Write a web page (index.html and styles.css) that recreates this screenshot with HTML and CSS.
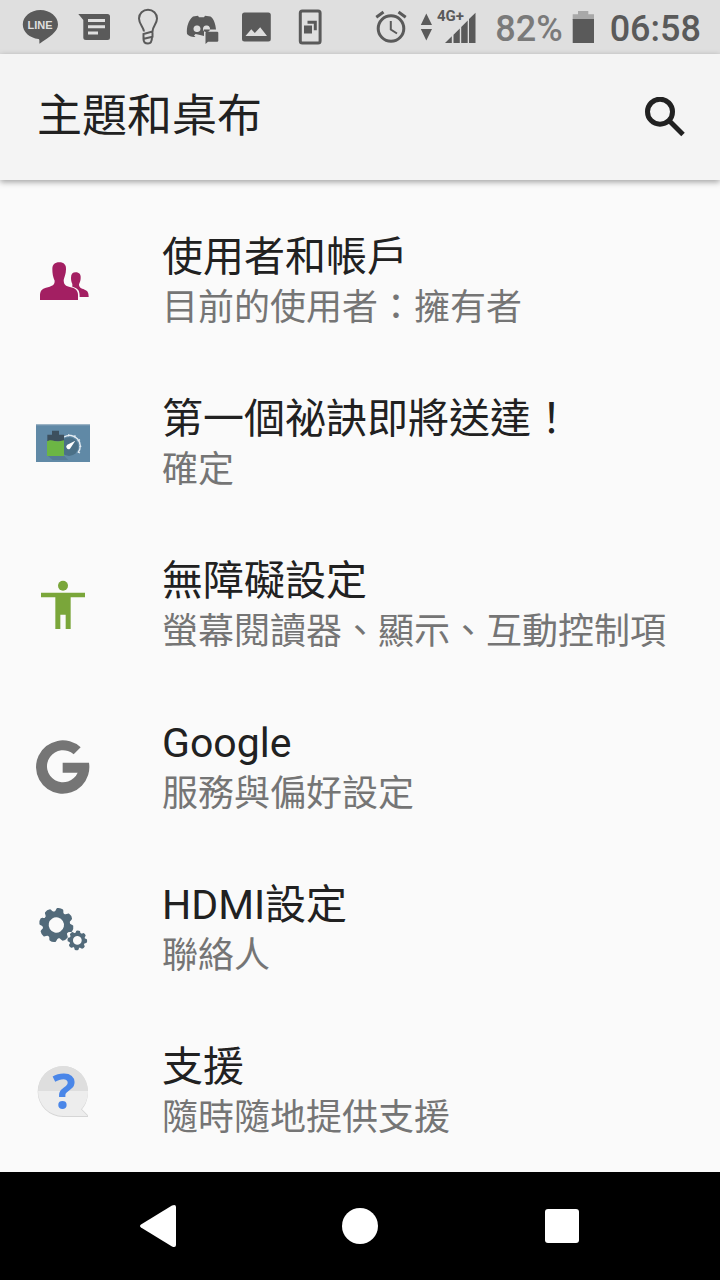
FILE: index.html
```html
<!DOCTYPE html>
<html lang="zh-Hant">
<head>
<meta charset="utf-8">
<meta name="viewport" content="width=device-width, initial-scale=1">
<title>主題和桌布</title>
<link rel="stylesheet" href="styles.css">
</head>
<body>
<div class="status-bar">
  <div class="notifications">
    <svg class="notification" viewBox="13 0 54 54" aria-hidden="true">
      <path d="M40.400 10C50 10 58 16.500 58 24.500C58 32 49 37 39.500 43.700C39 42 40 39.500 38.500 39C29.500 38 22.800 32 22.800 24.500C22.800 16.500 30.500 10 40.400 10Z"/>
      <text class="line-word" x="40" y="29" text-anchor="middle">LINE</text>
    </svg>
    <svg class="notification" viewBox="67 0 54 54" aria-hidden="true">
      <path d="M78.300 14H107.500Q110 14 110 16.500V37.500Q110 40 107.500 40H86Q83.300 40 83.300 37.500V20Z"/>
      <path class="cutout-line" d="M88 20.500H105M88 26.800H105M88 33H98"/>
    </svg>
    <svg class="notification" viewBox="121 0 54 54" aria-hidden="true">
      <path class="outline-thin" d="M144 31.500C143.500 27 139 24 139 18.500C139 13.500 143 9.800 148 9.800C153 9.800 157 13.500 157 18.500C157 24 152.500 26.500 152.500 31.500L143.500 34V39C143.500 42.500 145 43.500 148 43.500C151 43.500 152 41.500 152 37M144 38.800L152.500 36.800V31.500"/>
    </svg>
    <svg class="notification" viewBox="175 0 54 54" aria-hidden="true">
      <path fill-rule="evenodd" d="M193 16.500L198 15.800L199 17.200H204L205 15.800L210.500 16.500C214 19 215.500 24 216 29.500H204V36L200 35L195.500 34L194 35.500L195.500 37C192 37.500 189 36 187 34C186.300 27 188.500 20 193 16.500ZM197 25.500A3 3.300 0 1 0 197 32A3 3.300 0 1 0 197 25.500ZM206.500 25.500A3 3.300 0 1 0 206.500 32A3 3.300 0 1 0 206.500 25.500Z"/>
      <path d="M206.500 31.700H217.500L218.300 32.500V41L217.500 41.800H208L205.500 44V32.500Z"/>
    </svg>
    <svg class="notification" viewBox="229 0 54 54" aria-hidden="true">
      <rect x="242" y="12.600" width="28.800" height="28.800" rx="2.500"/>
      <path class="cutout" d="M245.500 36L251.300 29.300L254.800 33L260.200 27.200L267 36Z"/>
    </svg>
    <svg class="notification" viewBox="283 0 54 54" aria-hidden="true">
      <rect class="outline" x="300.300" y="11" width="19.800" height="32" rx="2"/>
      <rect x="304" y="25.500" width="8" height="8"/>
      <path d="M307.500 20.800H316.800V30.300H313.800V23.700H307.500Z"/>
    </svg>
  </div>
  <div class="system">
    <svg class="alarm" viewBox="374 0 34 54" aria-label="鬧鐘">
      <circle class="outline" cx="391" cy="28.500" r="12.800"/>
      <path class="outline" d="M376.300 17.200L383.500 12M398.500 12L405.700 17.200"/>
      <path class="outline-thin" d="M390.800 21V29.500L397 33.500"/>
    </svg>
    <svg class="signal" viewBox="420 0 58 54" aria-label="4G+">
      <path d="M426.300 13.500L432 25H420.800ZM420.800 29H432L426.300 40.500Z"/>
      <path d="M445 43L451.800 36.300V43ZM453.500 43V34.700L459.800 28.500V43ZM461.200 43V27L467.700 20.500V43ZM469 43V19L475.500 12.800V43Z"/>
      <text class="network" x="437" y="21">4G+</text>
    </svg>
    <span class="percent">82%</span>
    <svg class="battery" viewBox="572 0 22 54" aria-label="電池">
      <path class="battery-empty" d="M578 11H588.300V14.300H594V20H572.700V14.300H578Z"/>
      <path d="M572.700 19H594V43H572.700Z"/>
    </svg>
    <span class="clock">06:58</span>
  </div>
</div>

<header class="app-bar">
  <h1 class="app-title">主題和桌布</h1>
  <button class="search" type="button" aria-label="搜尋">
    <svg class="search-icon" viewBox="645 96 40 40" aria-hidden="true">
      <circle cx="660" cy="110.700" r="12.500"/>
      <path d="M670 120.500L683 133.500"/>
    </svg>
  </button>
</header>

<main class="settings">
  <a class="item" href="#users">
    <svg class="item-icon" viewBox="0 3 270 240" aria-hidden="true">
      <g class="users">
        <path d="M118 67C132 67 139 75 138 88C138 102 133 112 131 120C131 139 142 139 158 143C170 147 174 155 174 165V180H60V165C60 153 66 146 78 143C95 138 104 137 104 122C99 112 97 101 97 87C97 74 104 67 118 67Z"/>
        <path d="M167 97C178 97 183 104 182 114C182 123 179 127 177 133C177 143 183 145 194 149C203 152 206 158 206 171H179C179 153 176 145 157 140V132C154 126 153 120 153 113C153 102 158 97 167 97Z"/>
      </g>
    </svg>
    <span class="item-text"><span class="item-title">使用者和帳戶</span><span class="item-note">目前的使用者：擁有者</span></span>
  </a>
  <a class="item" href="#tips">
    <svg class="item-icon" viewBox="0 -21 270 240" aria-hidden="true">
      <rect fill="#6089a6" x="48" y="43" width="162" height="113"/>
      <path fill="#9eb5c5" d="M48 43H210V46H48Z"/>
      <path fill="#557b96" d="M83 137H132L145 150H98Z"/>
      <circle fill="#4b7087" cx="147" cy="110" r="28"/>
      <path fill="none" stroke="#e4ecf2" stroke-width="4" d="M132 81A32 32 0 0 1 174 128"/>
      <path fill="none" stroke="#e4ecf2" stroke-width="4" d="M146 79V73M162 82L166 76M173 93L180 89M178 109H184M174 126L180 129"/>
      <path fill="#3d505e" d="M82 74H96V62H117V74H132V94H82Z"/>
      <path fill="#6cb644" d="M81 94C94 85 106 96 118 94L132 91V138H81Z"/>
      <path fill="#fff" d="M166 92L150 116A7 7 0 1 1 142 104Z"/>
    </svg>
    <span class="item-text"><span class="item-title">第一個祕訣即將送達！</span><span class="item-note">確定</span></span>
  </a>
  <a class="item" href="#accessibility">
    <svg class="item-icon" viewBox="0 0 270 240" aria-hidden="true">
      <g class="accessibility">
        <circle cx="129" cy="62" r="15"/>
        <path d="M63 83H195V97H152V192H137V149H121V192H106V97H63Z"/>
      </g>
    </svg>
    <span class="item-text"><span class="item-title">無障礙設定</span><span class="item-note">螢幕閱讀器、顯示、互動控制項</span></span>
  </a>
  <a class="item" href="#google">
    <svg class="item-icon" viewBox="0 6 270 240" aria-hidden="true">
      <path class="google" d="M182 67A80 80 0 1 0 207 113H128V143H173A48 48 0 1 1 161 88Z"/>
    </svg>
    <span class="item-text"><span class="item-title">Google</span><span class="item-note">服務與偏好設定</span></span>
  </a>
  <a class="item" href="#hdmi">
    <svg class="item-icon" viewBox="0 -3 270 240" aria-hidden="true">
      <defs>
        <path id="tooth" d="M-15 -36C-11 -40 -12 -47 -9 -50Q0 -54 9 -50C12 -47 11 -40 15 -36Z"/>
        <g id="teeth">
          <use href="#tooth"/><use href="#tooth" transform="rotate(45)"/>
          <use href="#tooth" transform="rotate(90)"/><use href="#tooth" transform="rotate(135)"/>
          <use href="#tooth" transform="rotate(180)"/><use href="#tooth" transform="rotate(225)"/>
          <use href="#tooth" transform="rotate(270)"/><use href="#tooth" transform="rotate(315)"/>
        </g>
      </defs>
      <g class="gears">
        <g transform="translate(109 105) rotate(13)"><use href="#teeth"/><circle class="gear-ring" r="32"/></g>
        <g transform="translate(172 151) rotate(5) scale(.57)"><use href="#teeth"/><circle class="gear-ring" r="32"/></g>
      </g>
    </svg>
    <span class="item-text"><span class="item-title">HDMI設定</span><span class="item-note">聯絡人</span></span>
  </a>
  <a class="item" href="#support">
    <svg class="item-icon" viewBox="0 3 270 240" aria-hidden="true">
      <path fill="#d5d5d5" d="M129 49A76 76 0 1 0 129 201H204V196L186 178C224 136 201 49 129 49Z"/>
      <path fill="#ededed" d="M54 123A75 75 0 0 0 129 198H203L183 178C197 164 204 145 204 123Z"/>
      <path fill="#dedede" d="M54 123A75 75 0 0 1 204 123Z"/>
      <text class="question" x="132" y="176" text-anchor="middle">?</text>
    </svg>
    <span class="item-text"><span class="item-title">支援</span><span class="item-note">隨時隨地提供支援</span></span>
  </a>
</main>

<nav class="nav-bar">
  <button class="nav-button" type="button" aria-label="返回"><svg class="nav-icon" viewBox="0 0 44 44"><path d="M5 20.500L36 1.500Q40 0 40 3V41Q40 44 36 42.500L5 23.500Q3 22 5 20.500Z"/></svg></button>
  <button class="nav-button" type="button" aria-label="主畫面"><svg class="nav-icon" viewBox="0 0 44 44"><circle cx="22" cy="22" r="18"/></svg></button>
  <button class="nav-button" type="button" aria-label="總覽"><svg class="nav-icon" viewBox="0 0 44 44"><rect x="5" y="5" width="34" height="34" rx="3"/></svg></button>
</nav>
</body>
</html>
```

FILE: styles.css
```css
* {
  box-sizing: border-box;
}

body {
  margin: 0;
  min-height: 100vh;
  display: flex;
  flex-direction: column;
  background: #fafafa;
  color: #212121;
  font-family: Roboto, "Noto Sans CJK TC", sans-serif;
}

button {
  border: 0;
  padding: 0;
  background: none;
}

svg {
  display: block;
  flex: none;
}

/* Status bar */
.status-bar {
  height: 54px;
  padding: 0 19px 0 13px;
  display: flex;
  justify-content: space-between;
  background: #dfdfdf;
  color: #5a5a5a;
  fill: #5a5a5a;
}

.notifications,
.system {
  display: flex;
  align-items: center;
}

.notification {
  width: 54px;
  height: 54px;
}

.cutout {
  fill: #dfdfdf;
}

.cutout-line {
  stroke: #dfdfdf;
  stroke-width: 3;
}

.outline,
.outline-thin {
  fill: none;
  stroke: #5a5a5a;
  stroke-width: 3;
}

.outline-thin {
  stroke-width: 2;
}

.line-word {
  font: 700 11px "Liberation Sans", sans-serif;
  fill: #dfdfdf;
}

.network {
  font: 700 15px Roboto, sans-serif;
}

.alarm {
  width: 34px;
  height: 54px;
  margin-right: 12px;
}

.signal {
  width: 58px;
  height: 54px;
  margin-right: 17px;
}

.percent,
.clock {
  font-size: 36px;
  line-height: 54px;
  font-weight: 500;
  padding-top: 3px;
}

.percent {
  color: #7a7a7a;
}

.battery {
  width: 22px;
  height: 54px;
  margin: 0 16px 0 9px;
}

.battery-empty {
  fill: #a8a8a8;
}

/* App bar */
.app-bar {
  height: 126px;
  padding: 0 35px 0 37px;
  display: flex;
  align-items: center;
  justify-content: space-between;
  background: #f4f4f4;
  box-shadow: 0 2px 6px rgba(0, 0, 0, 0.36);
}

.app-title {
  margin: 0;
  font-size: 45px;
  line-height: 60px;
  font-weight: 400;
}

.search-icon {
  width: 40px;
  height: 40px;
  fill: none;
  stroke: #212121;
  stroke-width: 5;
}

/* Settings list */
.settings {
  flex: 1;
  padding-top: 20px;
}

.item {
  height: 162px;
  padding: 0 20px;
  display: flex;
  align-items: center;
  gap: 52px;
  color: inherit;
  text-decoration: none;
}

.item-icon {
  width: 90px;
  height: 80px;
}

.item-text {
  display: flex;
  flex-direction: column;
}

.item-title {
  font-size: 41px;
  line-height: 54px;
}

.item-note {
  font-size: 36px;
  line-height: 48px;
  color: #757575;
}

.users {
  fill: #a31f62;
}

.accessibility {
  fill: #7aa63a;
}

.google {
  fill: #757575;
}

.gears {
  fill: #526a7a;
}

.gear-ring {
  fill: none;
  stroke: #526a7a;
  stroke-width: 18;
}

.question {
  font: 700 146px "Open Sans", sans-serif;
  fill: #4a86e8;
}

/* Navigation bar */
.nav-bar {
  height: 108px;
  padding: 0 8%;
  display: flex;
  background: #000;
}

.nav-button {
  flex: 1;
  display: flex;
  align-items: center;
  justify-content: center;
}

.nav-icon {
  width: 44px;
  height: 44px;
  fill: #fff;
}
```
